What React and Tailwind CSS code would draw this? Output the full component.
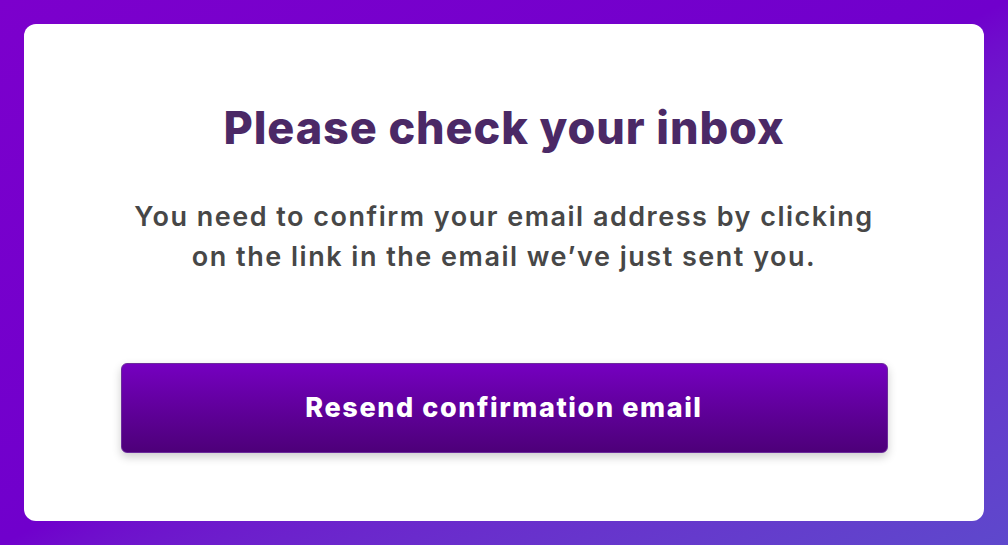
export default function App() {
  return (
    <div className="w-[1008px] h-[545px] p-6 bg-gradient-to-br from-[#7c00cc] via-[#7000cc] to-[#5e48cc]" style={{ fontFamily: 'Inter, "Noto Sans", sans-serif' }}>
      <div className="h-full w-full bg-white rounded-xl flex flex-col items-center pt-[76px]">
        <h1 className="text-[45px] leading-[56px] font-extrabold text-[#4b2966] tracking-[0.9px]">Please check your inbox</h1>
        <p className="mt-[41px] text-[27px] leading-[40px] font-semibold text-[#474747] text-center tracking-[1.5px]">
          You need to confirm your email address by clicking<br />on the link in the email we’ve just sent you.
        </p>
        <button className="mt-[86px] w-[767px] h-[90px] rounded-md border border-[#6b2b9b] bg-gradient-to-b from-[#7500c0] to-[#4d0079] text-white text-[27px] font-extrabold tracking-[1.6px] shadow-[0_4px_10px_rgba(0,0,0,0.2)]">
          Resend confirmation email
        </button>
      </div>
    </div>
  )
}
